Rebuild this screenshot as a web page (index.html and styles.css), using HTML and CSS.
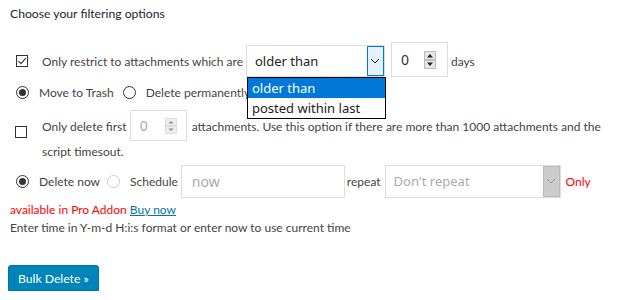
FILE: index.html
```html
<!DOCTYPE html>
<html lang="en">
<head>
  <meta charset="UTF-8">
  <title>Bulk Delete Attachments</title>
  <link rel="stylesheet" href="styles.css">
</head>
<body>
  <div class="filters">
    <h4 class="title">Choose your filtering options</h4>

    <div class="row row-restrict">
      <span class="check checked">
        <svg width="10" height="10" viewBox="0 0 10 10"><path d="M1.5 5.2 L4 7.6 L8.7 2.2" fill="none" stroke="#333" stroke-width="1.1"/></svg>
      </span>
      <span class="cell">Only restrict to attachments which are</span>
      <span class="select">
        <span class="select-value">older than</span>
        <span class="select-arrow">
          <svg width="10" height="6" viewBox="0 0 10 6"><path d="M1 1 L5 5 L9 1" fill="none" stroke="#333" stroke-width="1"/></svg>
        </span>
        <ul class="select-list">
          <li class="active">older than</li>
          <li>posted within last</li>
        </ul>
      </span>
      <span class="number">
        <span class="number-value">0</span>
        <span class="spin">
          <svg width="12" height="18" viewBox="0 0 12 18"><rect x="0.5" y="0.5" width="11" height="17" fill="#e6e6e6" stroke="#bbb"/><line x1="1" y1="9" x2="11" y2="9" stroke="#999"/><path d="M3 6.5 L6 3 L9 6.5 Z" fill="#222"/><path d="M3 11.5 L6 15 L9 11.5 Z" fill="#222"/></svg>
        </span>
      </span>
      <span class="days">days</span>
    </div>

    <div class="row row-action">
      <span class="radio checked"></span>
      <span class="radio-label">Move to Trash</span>
      <span class="radio"></span>
      <span class="radio-label">Delete permanently</span>
    </div>

    <div class="row row-limit">
      <span class="check"></span>
      <div class="cell limit-text">
        Only delete first <span class="number small"><span class="number-value muted">0</span><span class="spin"><svg width="12" height="16" viewBox="0 0 12 16"><rect x="0.5" y="0.5" width="11" height="15" fill="#eee" stroke="#ddd"/><line x1="1" y1="8" x2="11" y2="8" stroke="#ccc"/><path d="M3.5 5.5 L6 3 L8.5 5.5 Z" fill="#888"/><path d="M3.5 10.5 L6 13 L8.5 10.5 Z" fill="#888"/></svg></span></span> attachments. Use this option if there are more than 1000 attachments and the script timesout.
      </div>
    </div>

    <div class="row row-schedule">
      <span class="radio checked"></span>
      <span class="radio-label">Delete now</span>
      <span class="radio disabled"></span>
      <span class="radio-label">Schedule</span>
      <span class="text-input">now</span>
      <span class="repeat">repeat</span>
      <span class="select disabled">
        <span class="select-value">Don't repeat</span>
        <span class="select-arrow">
          <svg width="10" height="6" viewBox="0 0 10 6"><path d="M1 1 L5 5 L9 1" fill="none" stroke="#999" stroke-width="1"/></svg>
        </span>
      </span>
      <span class="pro">Only</span>
    </div>
    <p class="pro-line"><span class="pro">available in Pro Addon</span> <a href="#">Buy now</a></p>
    <p class="hint">Enter time in Y-m-d H:i:s format or enter now to use current time</p>

    <button class="button-primary" type="submit">Bulk Delete &raquo;</button>
  </div>
</body>
</html>
```

FILE: styles.css
```css
body {
  margin: 0;
  font-family: Lato, "Open Sans", sans-serif;
  font-size: 12px;
  color: #444;
  background: #fff;
}
.filters {
  padding: 4px 10px 0 10px;
}
.title {
  margin: 0;
  font-size: 12.2px;
  font-weight: 400;
  line-height: 20px;
  color: #23282d;
}
.row {
  display: flex;
  align-items: center;
}
.row-restrict {
  margin-top: 18px;
  height: 38px;
  margin-left: 6px;
}
.check {
  width: 12px;
  height: 12px;
  border: 1px solid #333;
  box-sizing: border-box;
  display: flex;
  align-items: center;
  justify-content: center;
  flex: none;
}
.cell {
  margin-left: 14px;
}
.select {
  position: relative;
  display: flex;
  align-items: center;
  width: 139px;
  height: 32px;
  margin-left: 3px;
  box-sizing: border-box;
  border: 1px solid #ddd;
  background: #fff;
  font-family: "Noto Sans", sans-serif;
  font-size: 13px;
  color: #222;
}
.select-value {
  flex: 1;
  padding-left: 8px;
}
.select-arrow {
  width: 17px;
  height: 30px;
  box-sizing: border-box;
  border: 1px solid #0078d7;
  background: #e5f1fb;
  display: flex;
  align-items: center;
  justify-content: center;
}
.select-list {
  position: absolute;
  left: 0;
  top: 31px;
  width: 139px;
  margin: 0;
  padding: 0;
  list-style: none;
  border: 1px solid #000;
  box-sizing: border-box;
  background: #fff;
  z-index: 2;
}
.select-list li {
  height: 20px;
  line-height: 20px;
  padding-left: 4px;
}
.select-list li.active {
  background: #0078d7;
  color: #fff;
}
.number {
  display: inline-flex;
  align-items: center;
  width: 57px;
  height: 35px;
  box-sizing: border-box;
  border: 1px solid #ddd;
  margin-left: 6px;
  margin-top: -3px;
  font-family: "Noto Sans", sans-serif;
  font-size: 14px;
  color: #333;
}
.number-value {
  flex: 1;
  padding-left: 9px;
}
.number-value.muted {
  color: #aaa;
}
.spin {
  display: flex;
  margin-right: 11px;
}
.days {
  margin-left: 3px;
}
.radio {
  width: 13px;
  height: 13px;
  border: 1px solid #333;
  border-radius: 50%;
  box-sizing: border-box;
  flex: none;
  position: relative;
}
.radio.checked::after {
  content: "";
  position: absolute;
  left: 2px;
  top: 2px;
  width: 7px;
  height: 7px;
  border-radius: 50%;
  background: #333;
}
.radio.disabled {
  border-color: #ccc;
}
.radio-label {
  margin-left: 10px;
  margin-right: 9px;
}
.row-action {
  height: 24px;
  margin-left: 6px;
}
.row-limit {
  margin-left: 5px;
  margin-top: 6px;
  align-items: flex-start;
}
.row-limit .check {
  margin-top: 16px;
}
.limit-text {
  line-height: 22px;
  margin-left: 15px;
}
.number.small {
  width: 57px;
  height: 31px;
  margin: 0 2px 0 0;
  vertical-align: baseline;
}
.number.small .spin {
  margin-right: 9px;
}
.row-schedule {
  margin-left: 6px;
  height: 36px;
}
.row-schedule .radio-label {
  margin-right: 7px;
}
.text-input {
  width: 164px;
  height: 33px;
  box-sizing: border-box;
  border: 1px solid #ddd;
  margin-left: -4px;
  padding-left: 10px;
  display: flex;
  align-items: center;
  font-family: "Noto Sans", sans-serif;
  font-size: 14px;
  color: #aaa;
}
.repeat {
  margin-left: 2px;
}
.select.disabled {
  width: 176px;
  height: 33px;
  margin-left: 4px;
  border-color: #ddd;
  color: #aaa;
}
.select.disabled .select-arrow {
  border: 1px solid #bbb;
  background: #ccc;
  height: 31px;
}
.pro {
  color: #f00;
}
.row-schedule .pro {
  margin-left: 5px;
}
.pro-line {
  margin: 2px 0 0 0;
  line-height: 18px;
}
.pro-line a {
  color: #0073aa;
}
.hint {
  margin: 0;
  line-height: 18px;
}
.button-primary {
  margin: 28px 0 0 -2px;
  height: 26px;
  padding: 0 9px;
  border: 1px solid #0073aa;
  border-radius: 3px;
  background: #0085ba;
  color: #fff;
  font-family: Lato, "Open Sans", sans-serif;
  font-size: 12.2px;
  box-shadow: 0 1px 0 #006799;
}
```
